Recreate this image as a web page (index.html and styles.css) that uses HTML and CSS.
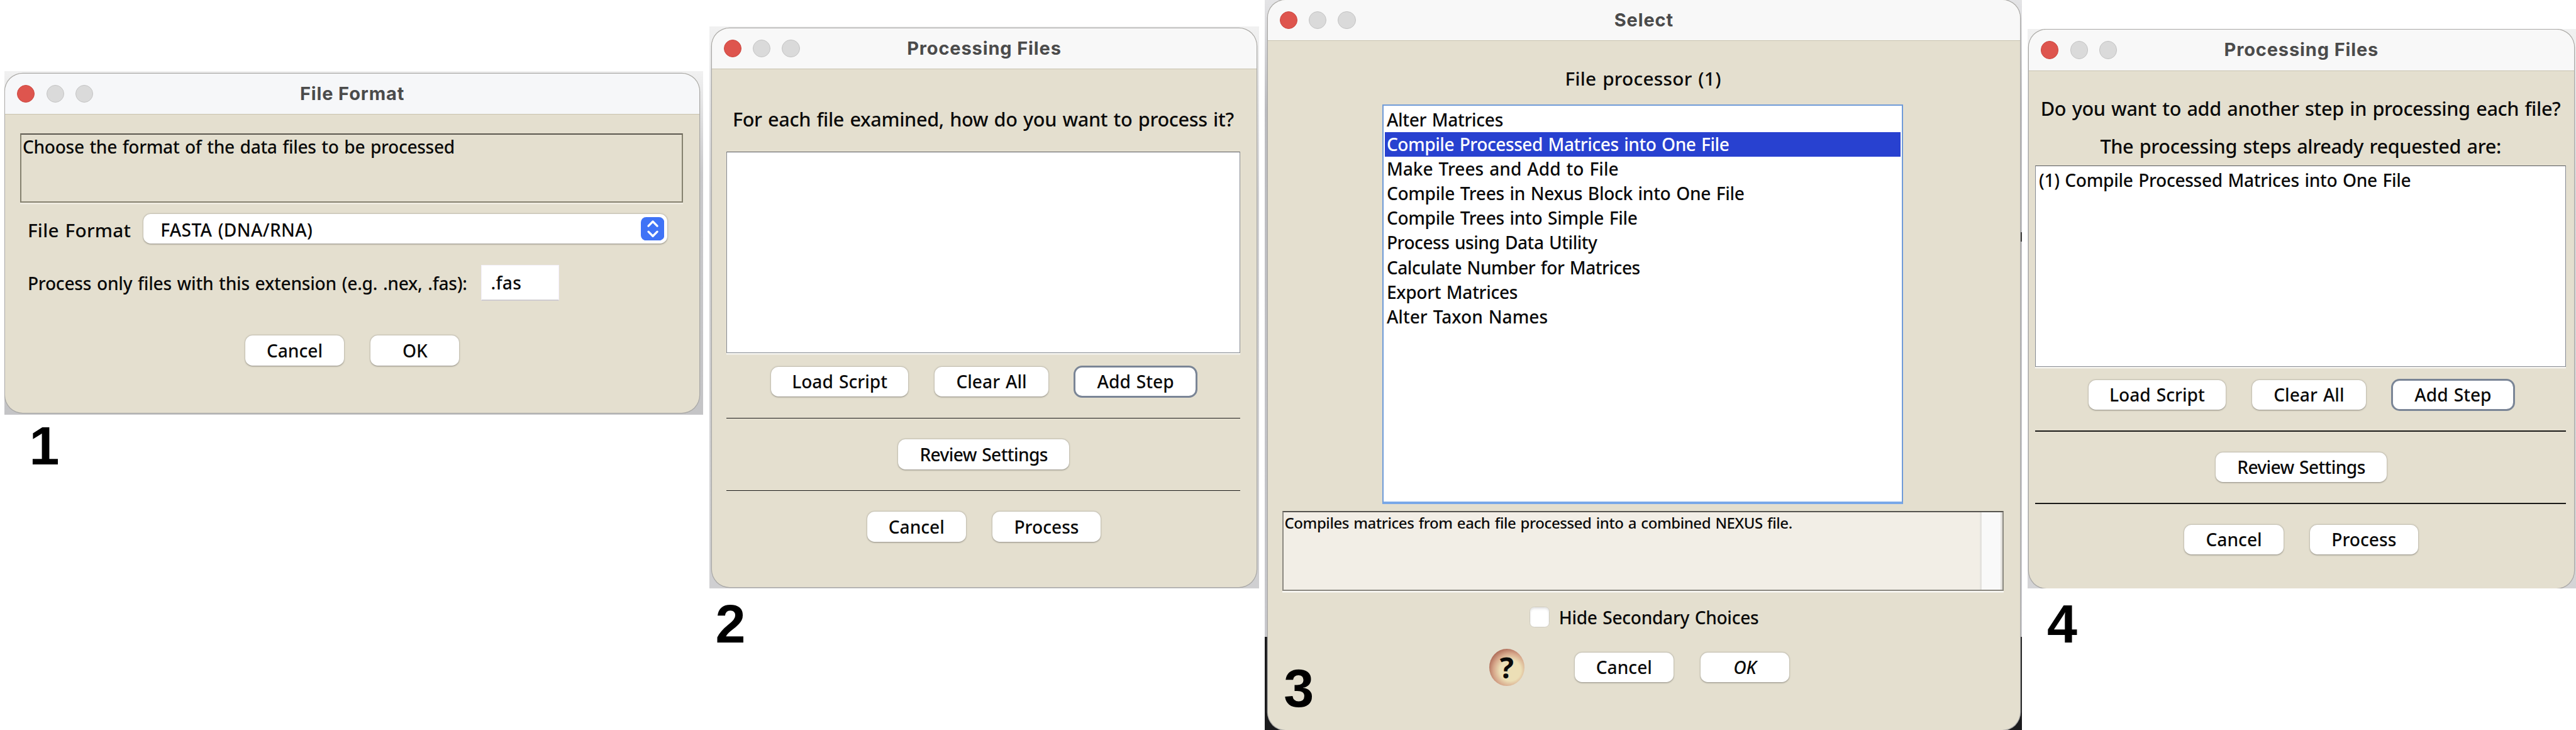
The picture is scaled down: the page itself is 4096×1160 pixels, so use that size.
FILE: index.html
```html
<!DOCTYPE html>
<html lang="en">
<head>
<meta charset="utf-8">
<title>Processing files</title>
<link rel="stylesheet" href="styles.css">
</head>
<body>
<main class="canvas">
  <section class="shot shot-format">
    <div class="window">
      <header class="titlebar"><i class="light close"></i><i class="light"></i><i class="light"></i><h2>File Format</h2></header>
      <div class="body">
        <div class="note t34">Choose the format of the data files to be processed</div>
        <div class="format-row">
          <label class="t36 format-label">File Format</label>
          <div class="select t34"><span>FASTA (DNA/RNA)</span>
            <svg class="stepper" viewBox="0 0 45 45"><rect width="45" height="45" rx="10"/><path d="M14.500 17l8.500-8.500 8.500 8.500M14.500 28l8.500 8.500 8.500-8.500"/></svg>
          </div>
        </div>
        <div class="ext-row t34"><span class="ext-label">Process only files with this extension (e.g. .nex, .fas):</span><div class="field">.fas</div></div>
        <div class="buttons"><button class="btn w-cancel">Cancel</button><button class="btn w-ok">OK</button></div>
      </div>
    </div>
  </section>
  <b class="num num-1">1</b>

  <section class="shot shot-process">
    <div class="window">
      <header class="titlebar"><i class="light close"></i><i class="light"></i><i class="light"></i><h2>Processing Files</h2></header>
      <div class="body">
        <p class="t38 question">For each file examined, how do you want to process it?</p>
        <div class="list"></div>
        <div class="buttons"><button class="btn w-load">Load Script</button><button class="btn w-clear">Clear All</button><button class="btn w-add focus">Add Step</button></div>
        <hr>
        <div class="buttons"><button class="btn w-review">Review Settings</button></div>
        <hr>
        <div class="buttons"><button class="btn w-cancel">Cancel</button><button class="btn w-process">Process</button></div>
      </div>
    </div>
  </section>
  <b class="num num-2">2</b>

  <section class="shot shot-select">
    <div class="window">
      <header class="titlebar"><i class="light close"></i><i class="light"></i><i class="light"></i><h2>Select</h2></header>
      <div class="body">
        <p class="t36 heading">File processor (1)</p>
        <ul class="choices">
          <li>Alter Matrices</li>
          <li class="selected">Compile Processed Matrices into One File</li>
          <li class="wide">Make Trees and Add to File</li>
          <li>Compile Trees in Nexus Block into One File</li>
          <li>Compile Trees into Simple File</li>
          <li class="tight">Process using Data Utility</li>
          <li class="tight">Calculate Number for Matrices</li>
          <li>Export Matrices</li>
          <li class="wide">Alter Taxon Names</li>
        </ul>
        <div class="explain t30"><span>Compiles matrices from each file processed into a combined NEXUS file.</span><div class="scroll"></div></div>
        <label class="check t34"><i class="box"></i><span>Hide Secondary Choices</span></label>
        <div class="foot"><span class="help">?</span><button class="btn w-cancel">Cancel</button><button class="btn w-ok default">OK</button></div>
      </div>
    </div>
  </section>
  <b class="num num-3">3</b>

  <section class="shot shot-again">
    <div class="window">
      <header class="titlebar"><i class="light close"></i><i class="light"></i><i class="light"></i><h2>Processing Files</h2></header>
      <div class="body">
        <p class="t38 question">Do you want to add another step in processing each file?</p>
        <p class="t38 subhead">The processing steps already requested are:</p>
        <div class="list t34">(1) Compile Processed Matrices into One File</div>
        <div class="buttons"><button class="btn w-load">Load Script</button><button class="btn w-clear">Clear All</button><button class="btn w-add focus">Add Step</button></div>
        <hr>
        <div class="buttons"><button class="btn w-review">Review Settings</button></div>
        <hr>
        <div class="buttons"><button class="btn w-cancel">Cancel</button><button class="btn w-process">Process</button></div>
      </div>
    </div>
  </section>
  <b class="num num-4">4</b>
</main>
</body>
</html>
```
FILE: styles.css
```css
* { box-sizing: border-box; margin: 0; padding: 0; }

/* 1rem is ten units of the 4944-unit wide board */
html { font-size: calc(100vw / 494.4); }

body {
  background: #fff;
  color: #0a0a0a;
  font-family: "Noto Sans", sans-serif;
  font-weight: 500;
  overflow: hidden;
}

.canvas { position: relative; width: 494.4rem; height: 140rem; overflow: hidden; background: #fff; }

/* captured areas */
.shot { position: absolute; overflow: hidden; background: linear-gradient(#f1f1f1, #c9c9cb 30%, #c4c4c6); }
.shot-format { left: .8rem; top: 13.6rem; width: 134.1rem; height: 65.9rem; padding: .5rem .7rem .3rem .2rem; }
.shot-process { left: 136.1rem; top: 5.1rem; width: 105.6rem; height: 107.7rem; padding: .3rem .5rem .2rem; background: linear-gradient(#f1f1f1, #d0d0d2 30%, #cfcfd1); }
.shot-select {
  left: 242.7rem; top: 0; width: 145.4rem; height: 140rem; padding: 0 .4rem 0 .6rem;
  background:
    linear-gradient(#333, #333) right 44.500rem / .4rem 1.800rem no-repeat,
    linear-gradient(#e4e4e6, #bcbcc0 15%, #c8c8cc 122.200rem, #1b1b1d 122.200rem);
}
.shot-again { left: 389.1rem; top: 5.5rem; width: 105.3rem; height: 107.3rem; padding: .2rem .4rem 0 .3rem; background: linear-gradient(#f1f1f1, #d8d8da 30%, #d4d4d6); }

.window {
  height: 100%;
  border-radius: 3.4rem;
  background: #e4dfcf;
  box-shadow: 0 0 0 .15rem #a9a8a6;
  overflow: hidden;
}

.titlebar {
  position: relative;
  display: flex;
  align-items: center;
  gap: 2.2rem;
  height: 7.9rem;
  padding-left: 2.3rem;
  background: #f8f8f8;
  border-bottom: .2rem solid #c9c3b0;
}
.shot-format .titlebar { background: #f6f7f9; }
.titlebar h2 {
  position: absolute;
  inset: 0;
  text-align: center;
  font: 700 3.5rem/7.800rem Inter, sans-serif;
  letter-spacing: .03em;
  color: #4b4b4b;
}
.light { width: 3.4rem; height: 3.4rem; border-radius: 50%; background: #dadada; border: .15rem solid #c4c4c4; }
.light.close { background: #de554e; border-color: #cc4841; }

.t30, .t34, .t36, .t38, .choices { white-space: nowrap; letter-spacing: -.012em; word-spacing: .06em; }
.t30 { font-size: 2.9rem; letter-spacing: -.018em; }
.t34 { font-size: 3.4rem; }
.t36 { font-size: 3.6rem; letter-spacing: .008em; }
.t38 { font-size: 3.7rem; }

.btn {
  display: block;
  height: 5.7rem;
  border: 0;
  border-radius: 1.4rem;
  background: #fff;
  box-shadow: 0 .1rem .3rem rgba(0, 0, 0, .4);
  color: inherit;
  font: 500 3.4rem/5.4rem "Noto Sans", sans-serif;
  word-spacing: .06em;
  text-align: center;
  white-space: nowrap;
}
.btn.focus { outline: .4rem solid #7a8596; outline-offset: -.2rem; box-shadow: none; }
.btn.default { font-style: italic; }
.w-cancel { width: 19rem; }
.w-ok { width: 17rem; }
.w-load { width: 26.300rem; }
.w-clear { width: 21.800rem; }
.w-add { width: 23.300rem; }
.w-review { width: 32.900rem; letter-spacing: -.022em; }
.w-process { width: 20.700rem; }
.buttons { display: flex; justify-content: center; gap: 5.1rem; padding-left: .2rem; }

/* 1: file format */
.shot-format .body { padding: 3.6rem 3.1rem 0 2.9rem; }
.note { height: 13.3rem; border: .3rem solid #85816f; border-top-color: #5a574e; box-shadow: 0 .3rem 0 #f0ede3; padding-left: .2rem; line-height: 4.6rem; }
.format-row { display: flex; margin: 2.1rem 0 0 1.400rem; height: 5.7rem; }
.format-label { width: 22.200rem; line-height: 6.3rem; }
.select { display: flex; justify-content: space-between; width: 100.6rem; padding: .6rem .6rem 0 3.3rem; border-radius: 1.4rem; background: #fff; box-shadow: 0 .1rem .3rem rgba(0, 0, 0, .4); line-height: 4.9rem; letter-spacing: .012em; }
.stepper { width: 4.5rem; height: 4.5rem; fill: #3f73f6; }
.stepper path { fill: none; stroke: #fff; stroke-width: 4; stroke-linecap: round; stroke-linejoin: round; }
.ext-row { display: flex; margin: 4.1rem 0 6.7rem 1.400rem; height: 6.9rem; line-height: 7rem; letter-spacing: -.009em; }
.ext-label { width: 87rem; }
.field { width: 15rem; padding-left: 1.800rem; background: #fff; border: .2rem solid #f3effa; border-bottom: .3rem solid #cfccd0; line-height: 6.6rem; letter-spacing: .01em; }

/* 2 and 4: processing files */
.shot-process .body { padding: 6.8rem 3.2rem 0 2.8rem; }
.shot-again .body { padding: 4.3rem 1.500rem 0 1.2rem; }
.question, .subhead { display: flex; justify-content: center; line-height: 6rem; }
.shot-process .question { height: 9rem; line-height: 5.400rem; }
.shot-again .question { height: 7.2rem; }
.shot-again .subhead { height: 6.700rem; }
.list { height: 38.600rem; margin-bottom: 2.700rem; background: #fff; border: .2rem solid #868a92; border-top-color: #55585c; box-shadow: 0 .3rem 0 #f6f5f0; line-height: 5.2rem; padding-left: .6rem; }
.shot-again .list { margin-bottom: 2.500rem; line-height: 5.400rem; }
hr { height: .2rem; border: 0; background: #1a1a18; margin: 4rem 0; }

/* 3: select */
.shot-select .body { padding: 4.6rem 3.1rem 0 2.8rem; }
.heading { text-align: center; height: 7.5rem; line-height: 5rem; }
.choices { width: 100rem; height: 76.700rem; margin: 0 auto 1.300rem 19.2rem; padding: .4rem .3rem; list-style: none; background: #fff; border: .3rem solid #6f9bd8; border-bottom: .5rem solid #7aa8e8; font-size: 3.4rem; line-height: 4.72rem; }
.choices li { height: 4.72rem; padding-left: .3rem; }
.choices .selected { background: #2841d0; color: #fff; letter-spacing: -.017em; }
.choices .wide { letter-spacing: -.001em; }
.choices .tight { letter-spacing: -.018em; }
.explain { display: flex; justify-content: space-between; height: 15.300rem; padding-left: .2rem; border: .3rem solid #8b8880; border-top-color: #55534e; background: #f2eee6; box-shadow: 0 .3rem 0 #faf9f5; line-height: 4.100rem; }
.scroll { width: 4.4rem; background: #f9f9f9; border: solid #e4e2de; border-width: 0 .4rem; }
.check { display: flex; gap: 1.800rem; margin: 3.100rem 0 0 47.400rem; line-height: 4.300rem; height: 4.100rem; }
.box { width: 3.900rem; height: 3.900rem; border-radius: .9rem; background: #fff; border: .1rem solid #cfccc0; box-shadow: inset 0 .3rem .4rem #e4e4e4; }
.foot { display: flex; align-items: center; margin: 3.900rem 0 0 39.700rem; }
.foot .w-cancel { margin: 0 5.200rem 0 9.600rem; }
.help { width: 6.800rem; height: 7.200rem; border-radius: 50%; background: radial-gradient(circle 4.800rem at 60% 58%, #ecdfb6 42%, #d6a68a 68%, #b06e5a 90%); text-align: center; font: 700 5.600rem/7.200rem "Noto Sans", sans-serif; }

.num { position: absolute; font: 700 10.4rem/10rem "Liberation Sans", Arial, sans-serif; color: #000; }
.num-1 { left: 5.6rem; top: 80.5rem; }
.num-2 { left: 137.3rem; top: 114.700rem; }
.num-3 { left: 246.400rem; top: 127rem; }
.num-4 { left: 392.900rem; top: 114.700rem; }
```
